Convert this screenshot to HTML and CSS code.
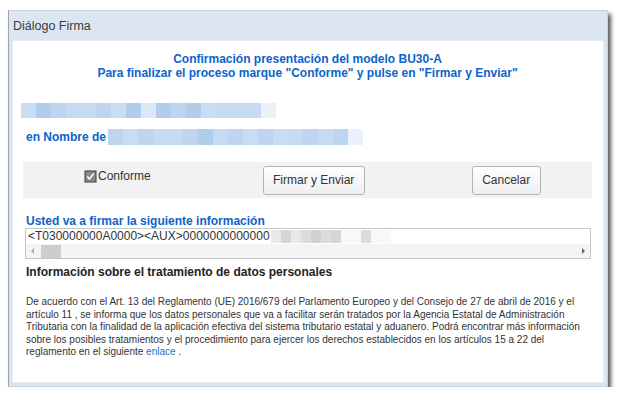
FILE: index.html
```html
<!DOCTYPE html>
<html lang="es">
<head>
<meta charset="utf-8">
<link rel="stylesheet" href="styles.css">
</head>
<body>
<div class="dialog">
  <div class="titlebar">Diálogo Firma</div>
  <div class="content">
    <div class="header">
      <div>Confirmación presentación del modelo BU30-A</div>
      <div>Para finalizar el proceso marque "Conforme" y pulse en "Firmar y Enviar"</div>
    </div>
    <div class="blur blur-id">
      <span class="b1"></span><span class="b2"></span><span class="b3"></span><span class="b4"></span><span class="b4"></span><span class="b3"></span><span class="b1"></span><span class="b2"></span><span class="b5"></span><span class="b2"></span><span class="b3"></span><span class="b2"></span><span class="b1"></span><span class="b4"></span><span class="b4"></span><span class="b4"></span><span class="b6"></span>
    </div>
    <div class="nombre">
      <span class="label">en Nombre de</span>
      <span class="blur blur-name">
        <span class="b3"></span><span class="b1"></span><span class="b3"></span><span class="b4"></span><span class="b4"></span><span class="b3"></span><span class="b2"></span><span class="b4"></span><span class="b3"></span><span class="b1"></span><span class="b3"></span><span class="b1"></span><span class="b4"></span><span class="b3"></span><span class="b4"></span><span class="b3"></span><span class="b6"></span>
      </span>
    </div>
    <div class="actions">
      <label class="check">
        <svg class="box" width="13" height="13" viewBox="0 0 13 13">
          <rect x="0.5" y="0.5" width="12" height="12" fill="#3a3a3a"/>
          <rect x="1.5" y="1.5" width="10" height="10" fill="#8a8a8a"/>
          <path d="M3.2 6.6 L5.4 8.9 L9.8 3.6" fill="none" stroke="#fff" stroke-width="1.6"/>
        </svg>Conforme
      </label>
      <button class="btn btn-firmar">Firmar y Enviar</button>
      <button class="btn btn-cancel">Cancelar</button>
    </div>
    <div class="sub">Usted va a firmar la siguiente información</div>
    <div class="field">
      <div class="field-text">&lt;T030000000A0000&gt;&lt;AUX&gt;0000000000000<span class="gblur"><span class="g1"></span><span class="g2"></span><span class="g1"></span><span class="g3"></span><span class="g4"></span><span class="g3"></span><span class="g2"></span><span class="g5"></span><span class="g5"></span><span class="g3"></span><span class="g5"></span><span class="g5"></span></span></div>
      <div class="scrollbar">
        <svg class="arrow" width="6" height="8" viewBox="0 0 6 8"><path d="M4 1 L1 4 L4 7 Z" fill="#aaa"/></svg>
        <span class="thumb"></span>
        <span class="spacer"></span>
        <svg class="arrow" width="6" height="8" viewBox="0 0 6 8"><path d="M2 1 L5 4 L2 7 Z" fill="#666"/></svg>
      </div>
    </div>
    <div class="info-title">Información sobre el tratamiento de datos personales</div>
    <p class="info">De acuerdo con el Art. 13 del Reglamento (UE) 2016/679 del Parlamento Europeo y del Consejo de 27 de abril de 2016 y el artículo 11 , se informa que los datos personales que va a facilitar serán tratados por la Agencia Estatal de Administración Tributaria con la finalidad de la aplicación efectiva del sistema tributario estatal y aduanero. Podrá encontrar más información sobre los posibles tratamientos y el procedimiento para ejercer los derechos establecidos en los artículos 15 a 22 del reglamento en el siguiente <a href="#" class="link">enlace</a> .</p>
  </div>
</div>
</body>
</html>
```

FILE: styles.css
```css
html, body {
  margin: 0;
  padding: 0;
  background: #ffffff;
}
body {
  font-family: "Liberation Sans", Arial, sans-serif;
  color: #333;
}
.dialog {
  margin: 10px 0 0 8px;
  width: 600px;
  height: 377px;
  box-sizing: border-box;
  background: #dce6f0;
  border: 1px solid #c6d1dc;
  border-left-color: #9aa4ae;
  padding: 0 3px 3px 3px;
  display: flex;
  flex-direction: column;
  box-shadow: 3px 4px 4px rgba(0,0,0,0.65);
}
.titlebar {
  height: 29px;
  line-height: 31px;
  font-size: 12.5px;
  color: #3c3c3c;
  padding-left: 1px;
  flex: none;
}
.content {
  flex: 1;
  background: #fff;
  border: 1px solid #e6ecf2;
  padding: 0 11px 0 10px;
}
.header {
  margin-top: 11px;
  text-align: center;
  font-weight: bold;
  font-size: 12px;
  line-height: 14px;
  color: #0d63c9;
}
.blur {
  display: flex;
}
.blur span {
  display: block;
  width: 15px;
  height: 15px;
}
.blur-id {
  margin-top: 23px;
  margin-left: -2px;
}
.b1 { background: #c8dcf2; }
.b2 { background: #b1cdec; }
.b3 { background: #bfd5ef; }
.b4 { background: #c6daf1; }
.b5 { background: #dde8f6; }
.b6 { background: #eaf1fa; }
.nombre {
  margin-top: 11px;
  display: flex;
  align-items: center;
  height: 16px;
}
.nombre .label {
  font-weight: bold;
  font-size: 12px;
  color: #0d63c9;
  margin-left: 3px;
}
.blur-name {
  margin-left: 2px;
}
.blur-name span {
  height: 16px;
}
.actions {
  margin-top: 17px;
  height: 36px;
  background: #f2f2f2;
  display: flex;
  align-items: center;
}
.check {
  display: flex;
  align-items: center;
  font-size: 12px;
  color: #333;
  margin-left: 61px;
  margin-top: -8px;
}
.check .box {
  display: block;
  margin-right: 1px;
}
.btn {
  font-family: "Liberation Sans", Arial, sans-serif;
  font-size: 12px;
  color: #333;
  height: 29px;
  background: linear-gradient(#ffffff, #efefef);
  border: 1px solid #b4b4b4;
  border-radius: 3px;
  padding: 0 6px;
}
.btn-firmar {
  margin-left: 112px;
  width: 102px;
}
.btn-cancel {
  margin-left: 107px;
  width: 69px;
}
.sub {
  margin-top: 17px;
  font-weight: bold;
  font-size: 12px;
  color: #0d63c9;
  margin-left: 3px;
  line-height: 13px;
}
.field {
  margin-top: 0;
  margin-left: 2px;
  margin-right: 1px;
  border: 1px solid #c8c8c8;
  height: 31px;
  box-sizing: border-box;
}
.field-text {
  font-size: 12px;
  color: #333;
  line-height: 15px;
  height: 15px;
  padding-left: 2px;
  display: flex;
  align-items: center;
  white-space: nowrap;
}
.gblur {
  display: flex;
  margin-left: 1px;
}
.gblur span {
  display: block;
  width: 10px;
  height: 13px;
}
.g1 { background: #e8e8e8; }
.g2 { background: #d6d6d6; }
.g3 { background: #dcdcdc; }
.g4 { background: #d0d0d0; }
.g5 { background: #f8f8f8; }
.scrollbar {
  height: 14px;
  background: #f4f4f4;
  display: flex;
  align-items: center;
  padding: 0 4px;
}
.thumb {
  display: block;
  width: 20px;
  height: 13px;
  background: #cdcdcd;
  margin-left: 5px;
}
.spacer { flex: 1; }
.arrow { display: block; }
.info-title {
  margin-top: 5px;
  margin-left: 3px;
  font-weight: bold;
  font-size: 12px;
  color: #222;
  line-height: 16px;
}
.info {
  margin: 16px 0 0 3px;
  font-size: 10px;
  line-height: 12.5px;
  color: #333;
}
.link {
  color: #1a6fd1;
  text-decoration: none;
}
```
